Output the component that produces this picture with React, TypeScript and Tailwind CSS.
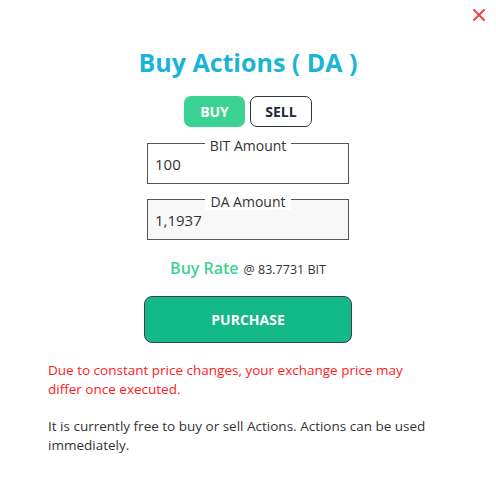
import { useState } from 'react';

export default function App() {
  const [mode, setMode] = useState<'buy' | 'sell'>('buy');

  return (
    <div className="relative w-[496px] h-[500px] bg-white" style={{ fontFamily: '"Open Sans", "DejaVu Sans", sans-serif' }}>
      {/* Close */}
      <button className="absolute right-[8px] top-[6px] w-[18px] h-[18px] flex items-center justify-center">
        <svg width="14" height="14" viewBox="0 0 14 14">
          <path d="M2 2 L12 12 M12 2 L2 12" stroke="#ef4444" strokeWidth="2" strokeLinecap="round" />
        </svg>
      </button>

      <div className="flex flex-col items-center pt-[45px]">
        <h1 className="text-[25px] leading-[34px] font-bold text-[#1ab5d6]">Buy Actions ( DA )</h1>

        {/* Buy / Sell */}
        <div className="flex gap-[5px] mt-[17px]">
          <button
            onClick={() => setMode('buy')}
            className={`w-[61px] h-[31px] rounded-[7px] text-[14px] font-bold ${mode === 'buy' ? 'bg-[#3ad394] text-white' : 'bg-white text-[#1f2937] border border-[#2d3340]'}`}
          >
            BUY
          </button>
          <button
            onClick={() => setMode('sell')}
            className={`w-[62px] h-[31px] rounded-[7px] text-[14px] font-bold ${mode === 'sell' ? 'bg-[#3ad394] text-white' : 'bg-white text-[#1f2937] border border-[#2d3340]'}`}
          >
            SELL
          </button>
        </div>

        {/* Inputs */}
        <fieldset className="mt-[6px] w-[202px] h-[51px] border border-[#555] px-[7px] pb-[2px]">
          <legend className="mx-auto px-[5px] pt-[5px] text-[14px] leading-[16px] text-[#333]">BIT Amount</legend>
          <div className="text-[15px] leading-[20px] text-[#333]">100</div>
        </fieldset>
        <fieldset className="mt-[5px] w-[202px] h-[51px] border border-[#555] bg-[#f8f8f8] px-[7px] pb-[2px]">
          <legend className="mx-auto px-[5px] pt-[5px] text-[14px] leading-[16px] text-[#333] bg-white">DA Amount</legend>
          <div className="text-[15px] leading-[20px] text-[#333]">1,1937</div>
        </fieldset>

        {/* Rate */}
        <div className="mt-[16px] flex items-baseline gap-[5px]">
          <span className="text-[16px] font-semibold text-[#3ad394]">Buy Rate</span>
          <span className="text-[12.5px] text-[#333]">@ 83.7731 BIT</span>
        </div>

        <button className="mt-[16px] w-[208px] h-[47px] rounded-[8px] bg-[#12b886] border border-[#3a4150] text-white text-[14px] font-bold">
          PURCHASE
        </button>
      </div>

      <div className="pl-[48px] pr-[58px] mt-[18px] text-[13.5px] leading-[19px]">
        <p className="text-[#ff1a1a]">Due to constant price changes, your exchange price may differ once executed.</p>
        <p className="mt-[18px] text-[#333]">It is currently free to buy or sell Actions. Actions can be used immediately.</p>
      </div>
    </div>
  );
}
